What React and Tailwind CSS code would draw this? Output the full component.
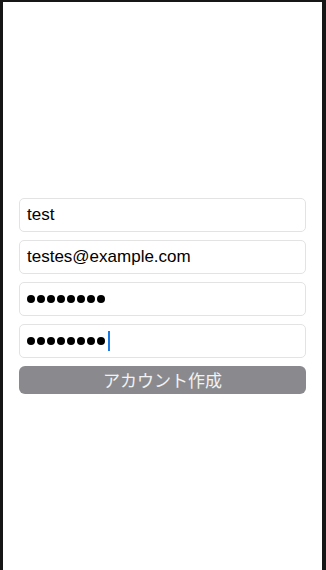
import React from "react";

function Dots({ caret }) {
  return (
    <div className="flex items-center gap-[2px]">
      {Array.from({ length: 8 }).map((_, i) => (
        <span key={i} className="block h-[8px] w-[8px] rounded-full bg-black" />
      ))}
      {caret && <span className="ml-[1px] block h-[20px] w-[2px] bg-[#1a7ae6]" />}
    </div>
  );
}

function Field({ children }) {
  return (
    <div className="flex h-[34px] items-center rounded-[5px] border border-[#e3e3e3] bg-white px-[7px] text-[17px] text-black">
      {children}
    </div>
  );
}

export default function App() {
  return (
    <div
      className="h-[570px] w-[326px] bg-[#161616] pl-[3px] pr-[4px] pt-[2px]"
      style={{ fontFamily: '"Liberation Sans", Arial, "Noto Sans CJK JP", sans-serif' }}
    >
      <div className="flex h-full flex-col gap-2 bg-white px-4 pt-[196px]">
        <Field>test</Field>
        <Field>testes@example.com</Field>
        <Field>
          <Dots />
        </Field>
        <Field>
          <Dots caret />
        </Field>
        <div
          className="flex h-[28px] items-center justify-center rounded-[6px] bg-[#8a8a8e] text-[17px] text-[#f2f2f2]"
          style={{ fontFamily: '"Noto Sans CJK JP", sans-serif' }}
        >
          アカウント作成
        </div>
      </div>
    </div>
  );
}
